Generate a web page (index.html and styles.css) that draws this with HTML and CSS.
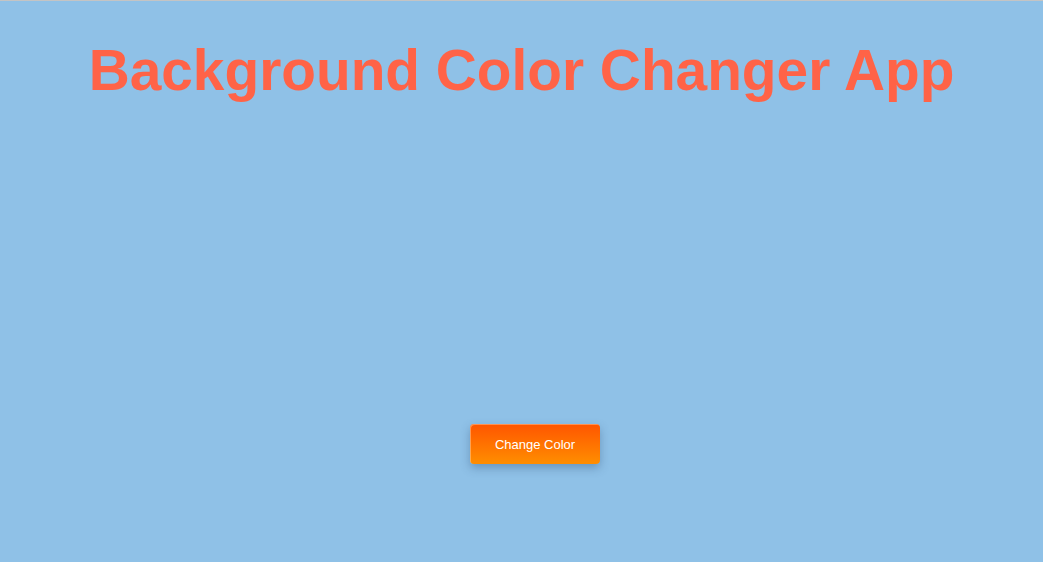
FILE: index.html
```html
<!DOCTYPE html>
<html>
<head>
<meta charset="utf-8">
<link rel="stylesheet" href="styles.css">
</head>
<body>
<div class="topline"></div>
<main class="app">
  <h1 class="title">Background Color Changer App</h1>
  <div class="actions">
    <button class="change-btn">Change Color</button>
  </div>
</main>
</body>
</html>
```
FILE: styles.css
```css
html, body {
  margin: 0;
  padding: 0;
  height: 100%;
}
body {
  background: #8fc1e7;
  font-family: "Liberation Sans", Arial, sans-serif;
  overflow: hidden;
}
.topline {
  height: 1px;
  background: #c4c4c4;
}
.app {
  display: flex;
  flex-direction: column;
  align-items: center;
}
.title {
  margin: 37px 0 0 0;
  font-size: 56.8px;
  line-height: 66px;
  font-weight: bold;
  color: #ff6347;
}
.actions {
  padding-top: 320px;
  margin-left: 27px;
}
.change-btn {
  width: 130px;
  height: 40px;
  border: none;
  border-radius: 4px;
  background: linear-gradient(to bottom, #ff5500, #ff8e00);
  color: #fff;
  font-family: "Liberation Sans", Arial, sans-serif;
  font-size: 13px;
  box-shadow: inset 1px 1px 0 rgba(255, 220, 180, 0.45), 0 4px 10px rgba(40, 70, 110, 0.35);
  cursor: pointer;
}
```
